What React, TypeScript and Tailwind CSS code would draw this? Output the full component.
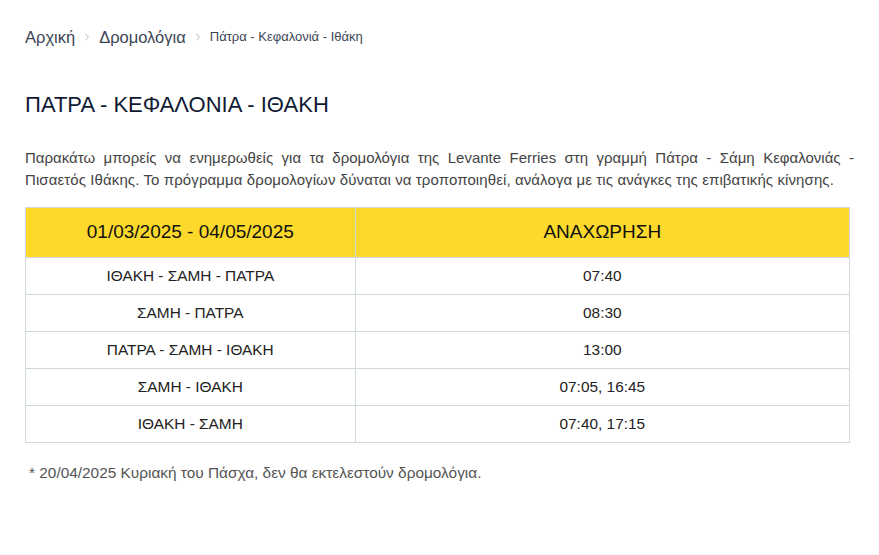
import { ChevronRight } from 'lucide-react';

const rows = [
  { route: 'ΙΘΑΚΗ - ΣΑΜΗ - ΠΑΤΡΑ', time: '07:40' },
  { route: 'ΣΑΜΗ - ΠΑΤΡΑ', time: '08:30' },
  { route: 'ΠΑΤΡΑ - ΣΑΜΗ - ΙΘΑΚΗ', time: '13:00' },
  { route: 'ΣΑΜΗ - ΙΘΑΚΗ', time: '07:05, 16:45' },
  { route: 'ΙΘΑΚΗ - ΣΑΜΗ', time: '07:40, 17:15' },
];

export default function App() {
  return (
    <div className="min-h-screen bg-white px-[25px] pt-[24px] font-['Liberation_Sans',Arial,sans-serif]">
      {/* Breadcrumb */}
      <nav className="flex items-center h-[24px] text-[#3b4556] translate-y-[1px]">
        <span className="text-[16.5px]">Αρχική</span>
        <ChevronRight className="mx-[6px] w-[12px] h-[12px] text-[#b0b6bf]" strokeWidth={2} />
        <span className="text-[16.5px]">Δρομολόγια</span>
        <ChevronRight className="mx-[6px] w-[12px] h-[12px] text-[#b0b6bf]" strokeWidth={2} />
        <span className="text-[13px]">Πάτρα - Κεφαλονιά - Ιθάκη</span>
      </nav>

      <h1 className="mt-[43px] text-[22px] leading-[28px] text-[#111a33]">ΠΑΤΡΑ - ΚΕΦΑΛΟΝΙΑ - ΙΘΑΚΗ</h1>

      <p className="mt-[28px] text-[15px] leading-[22px] text-[#444] text-justify">
        <span className="block [text-align-last:justify]">
          Παρακάτω μπορείς να ενημερωθείς για τα δρομολόγια της Levante Ferries στη γραμμή Πάτρα - Σάμη Κεφαλονιάς -
        </span>
        <span className="block tracking-[0.1px]">
          Πισαετός Ιθάκης. Το πρόγραμμα δρομολογίων δύναται να τροποποιηθεί, ανάλογα με τις ανάγκες της επιβατικής κίνησης.
        </span>
      </p>

      <table className="mt-[16px] w-[825px] border-collapse border border-[#cfd8dc]">
        <thead>
          <tr className="bg-[#fdd92b] h-[50px]">
            <th className="w-[40%] border border-[#cfd8dc] font-normal text-[19px] text-[#111]">01/03/2025 - 04/05/2025</th>
            <th className="border border-[#cfd8dc] font-normal text-[19px] text-[#111]">ΑΝΑΧΩΡΗΣΗ</th>
          </tr>
        </thead>
        <tbody>
          {rows.map((r) => (
            <tr key={r.route} className="h-[37px]">
              <td className="border border-[#cfd8dc] text-center text-[15.4px] text-[#222]">{r.route}</td>
              <td className="border border-[#cfd8dc] text-center text-[15.4px] text-[#222]">{r.time}</td>
            </tr>
          ))}
        </tbody>
      </table>

      <p className="mt-[20px] pl-[4px] text-[15.4px] leading-[20px] text-[#555]">
        * 20/04/2025 Κυριακή του Πάσχα, δεν θα εκτελεστούν δρομολόγια.
      </p>
    </div>
  );
}
